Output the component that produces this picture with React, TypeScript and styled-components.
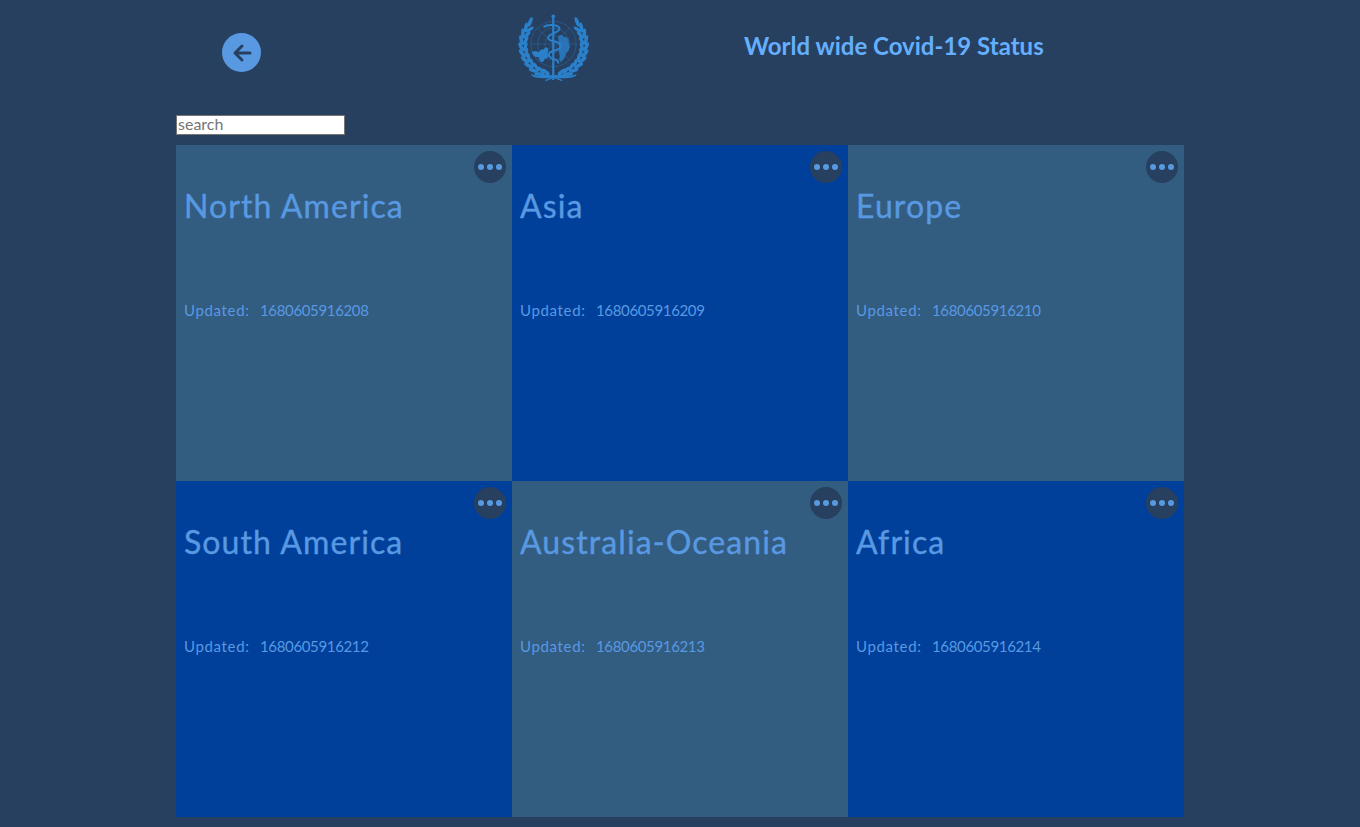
import React from "react";
import styled, { createGlobalStyle } from "styled-components";

const FONT = `"Lato", "Liberation Sans", sans-serif`;

const Global = createGlobalStyle`
  html, body { margin: 0; padding: 0; background: #274060; }
  body { font-family: ${FONT}; min-height: 827px; }
`;

const Page = styled.main`
  width: 1008px;
  margin: 0 auto;
  height: 827px;
  overflow: hidden;
`;

const Header = styled.header`
  display: flex;
  align-items: flex-start;
  height: 115px;
  padding-left: 46px;
  box-sizing: border-box;
`;

const BackButton = styled.button`
  width: 39px;
  height: 39px;
  margin-top: 33px;
  padding: 0;
  border: none;
  border-radius: 50%;
  background: #5899e2;
  color: #274060;
  display: flex;
  align-items: center;
  justify-content: center;
`;

const Logo = styled.svg`
  width: 77px;
  height: 70px;
  margin: 13px 0 0 255px;
  color: #2b80cb;
`;

const Title = styled.h1`
  margin: 32px 0 0 151px;
  font-size: 24px;
  line-height: 28px;
  font-weight: 700;
  letter-spacing: 0;
  color: #65afff;
  white-space: nowrap;
`;

const Search = styled.input`
  display: block;
  width: 169px;
  height: 20px;
  box-sizing: border-box;
  margin: 0 0 10px;
  padding: 0 1px 3px;
  border: 1px solid #767676;
  background: #fff;
  font-family: ${FONT};
  font-size: 16px;
  &::placeholder { color: #757575; opacity: 1; }
`;

const Grid = styled.section`
  display: grid;
  grid-template-columns: repeat(3, 336px);
  grid-auto-rows: 336px;
`;

const Card = styled.article<{ $tone: "slate" | "blue" }>`
  position: relative;
  box-sizing: border-box;
  padding: 41px 8px 0;
  background: ${(p) => (p.$tone === "slate" ? "#335c81" : "#00409a")};
  color: #5899e2;
`;

const More = styled.button`
  position: absolute;
  top: 6px;
  right: 6px;
  width: 32px;
  height: 32px;
  padding: 0;
  border: none;
  border-radius: 50%;
  background: #274060;
  display: flex;
  align-items: center;
  justify-content: center;
  gap: 3px;
`;

const Dot = styled.span`
  width: 6px;
  height: 6px;
  border-radius: 50%;
  background: #5899e2;
`;

const Name = styled.h2`
  margin: 0;
  font-size: 32px;
  line-height: 40px;
  font-weight: 400;
  letter-spacing: 1.1px;
  -webkit-text-stroke: 0.4px currentColor;
  white-space: nowrap;
`;

const Updated = styled.p`
  margin: 74px 0 0;
  font-size: 15px;
  line-height: 20px;
  white-space: pre;
  display: flex;
`;

const Label = styled.span`
  width: 76px;
  letter-spacing: 0.65px;
`;

const Stamp = styled.span`
  letter-spacing: -0.35px;
`;

const cards: { name: string; time: string; tone: "slate" | "blue" }[] = [
  { name: "North America", time: "1680605916208", tone: "slate" },
  { name: "Asia", time: "1680605916209", tone: "blue" },
  { name: "Europe", time: "1680605916210", tone: "slate" },
  { name: "South America", time: "1680605916212", tone: "blue" },
  { name: "Australia-Oceania", time: "1680605916213", tone: "slate" },
  { name: "Africa", time: "1680605916214", tone: "blue" },
];

const rad = Math.PI / 180;
const leafAngles = [-44, -32, -20, -8, 4, 16, 28, 40, 52, 64, 74];

function Wreath() {
  return (
    <g fill="currentColor">
      {leafAngles.map((a) => {
        const place = (r: number) => ({
          x: 162.5 - r * Math.cos(a * rad),
          y: 120 + r * Math.sin(a * rad),
        });
        const outer = place(98);
        const inner = place(85);
        return (
          <g key={a}>
            <ellipse cx={outer.x} cy={outer.y} rx="5.5" ry="15" transform={`rotate(${-a - 22} ${outer.x} ${outer.y})`} />
            {a > -40 && (
              <ellipse cx={inner.x} cy={inner.y} rx="5" ry="14" transform={`rotate(${-a + 22} ${inner.x} ${inner.y})`} />
            )}
          </g>
        );
      })}
    </g>
  );
}

function WhoLogo() {
  return (
    <Logo viewBox="50 25 230 210" fill="none" aria-label="World Health Organization">
      <g stroke="currentColor" strokeWidth="2" opacity="0.55">
        <circle cx="162" cy="118" r="68" />
        <circle cx="162" cy="118" r="48" />
        <circle cx="162" cy="118" r="26" />
        <path d="M92 118H232M113 69L211 167M211 69L113 167" />
      </g>
      <path
        fill="currentColor"
        d="M96 142l12-3 10 3 7-7 8-1 5-6 7 2 1 9-2 8 3 6-4 8-7 1-3 8-8 3-5-6-2-9-10-1-8-7z"
      />
      <path
        fill="currentColor"
        opacity="0.8"
        d="M176 94l10-4 7 6 9 2 6 8-1 10 4 10-4 12-8 7-2 11-6 10-7 6-5-6 2-12-3-11 2-13-3-9 1-12z"
      />
      <path d="M158 36h6.5v190H158z" fill="currentColor" />
      <circle cx="161.2" cy="35" r="5.5" fill="currentColor" />
      <path
        d="M134 66c10-7 42-8 46 5 3 14-34 14-34 28s38 8 38 25-36 10-36 26 28 10 28 24"
        stroke="currentColor"
        strokeWidth="6"
        strokeLinecap="round"
      />
      <Wreath />
      <g transform="translate(325 0) scale(-1 1)">
        <Wreath />
      </g>
      <path
        fill="currentColor"
        d="M94 208c22 8 46 8 66 2l3 4 3-4c20 6 44 6 66-2l-4 7c-20 8-44 7-65 2-21 5-45 6-65-2z"
      />
      <path d="M138 228l32-14M188 228l-32-14" stroke="currentColor" strokeWidth="4.5" />
    </Logo>
  );
}

export default function App() {
  return (
    <>
      <Global />
      <Page>
        <Header>
          <BackButton aria-label="back">
            <svg width="24" height="24" viewBox="0 0 24 24" fill="none" stroke="currentColor" strokeWidth="3" strokeLinecap="round" strokeLinejoin="round">
              <path d="M20 12H5M12 5l-7 7 7 7" />
            </svg>
          </BackButton>
          <WhoLogo />
          <Title>World wide Covid-19 Status</Title>
        </Header>
        <Search placeholder="search" />
        <Grid>
          {cards.map((c) => (
            <Card key={c.name} $tone={c.tone}>
              <More aria-label="more">
                <Dot />
                <Dot />
                <Dot />
              </More>
              <Name>{c.name}</Name>
              <Updated>
                <Label>Updated:</Label>
                <Stamp>{c.time}</Stamp>
              </Updated>
            </Card>
          ))}
        </Grid>
      </Page>
    </>
  );
}
